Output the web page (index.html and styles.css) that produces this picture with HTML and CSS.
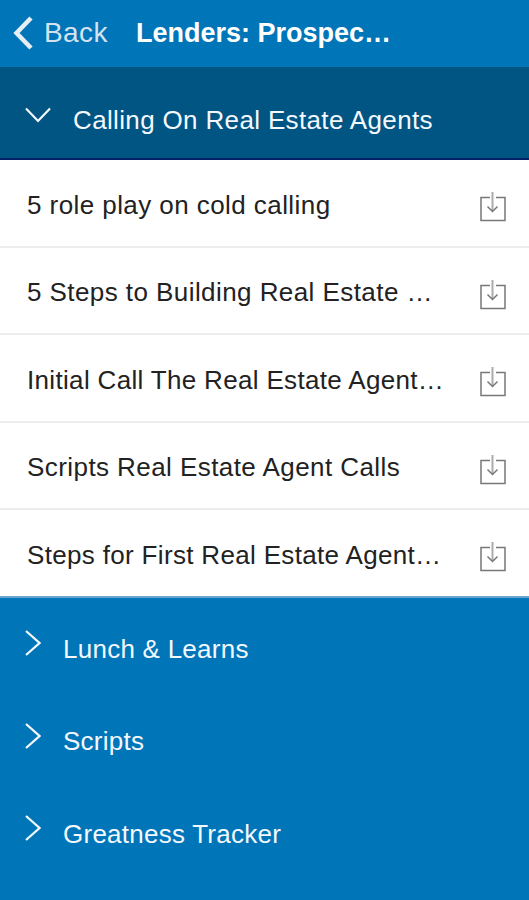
FILE: index.html
```html
<!DOCTYPE html>
<html lang="en">
<head>
    <meta charset="UTF-8">
    <meta name="viewport" content="width=device-width, initial-scale=1.0">
    <title>Lenders: Prospecting</title>
    <link rel="stylesheet" href="styles.css">
</head>
<body>
    <header class="navbar">
        <a class="back">
            <svg class="back-icon" width="20" height="34" viewBox="0 0 20 34"><path d="M18 2 L3.5 17 L18 32"/></svg>
            <span>Back</span>
        </a>
        <h1 class="title">Lenders: Prospec…</h1>
    </header>

    <div class="section open">
        <svg class="chevron" width="26" height="26" viewBox="0 0 26 26"><path d="M1 7.5 L13 20 L25 7.5"/></svg>
        <span>Calling On Real Estate Agents</span>
    </div>

    <ul class="files">
        <li>
            <span class="name">5 role play on cold calling</span>
            <svg class="download" width="26" height="31" viewBox="0 0 26 31"><path d="M10 6.5 H1 V29.5 H25 V6.5 H16"/><path class="arrow" d="M12.5 1 V20"/><path d="M7.5 15.5 L12.5 20.5 L17.5 15.5"/></svg>
        </li>
        <li>
            <span class="name">5 Steps to Building Real Estate …</span>
            <svg class="download" width="26" height="31" viewBox="0 0 26 31"><path d="M10 6.5 H1 V29.5 H25 V6.5 H16"/><path class="arrow" d="M12.5 1 V20"/><path d="M7.5 15.5 L12.5 20.5 L17.5 15.5"/></svg>
        </li>
        <li>
            <span class="name tight">Initial Call The Real Estate Agent…</span>
            <svg class="download" width="26" height="31" viewBox="0 0 26 31"><path d="M10 6.5 H1 V29.5 H25 V6.5 H16"/><path class="arrow" d="M12.5 1 V20"/><path d="M7.5 15.5 L12.5 20.5 L17.5 15.5"/></svg>
        </li>
        <li>
            <span class="name">Scripts Real Estate Agent Calls</span>
            <svg class="download" width="26" height="31" viewBox="0 0 26 31"><path d="M10 6.5 H1 V29.5 H25 V6.5 H16"/><path class="arrow" d="M12.5 1 V20"/><path d="M7.5 15.5 L12.5 20.5 L17.5 15.5"/></svg>
        </li>
        <li>
            <span class="name tight">Steps for First Real Estate Agent…</span>
            <svg class="download" width="26" height="31" viewBox="0 0 26 31"><path d="M10 6.5 H1 V29.5 H25 V6.5 H16"/><path class="arrow" d="M12.5 1 V20"/><path d="M7.5 15.5 L12.5 20.5 L17.5 15.5"/></svg>
        </li>
    </ul>

    <div class="section">
        <svg class="chevron" width="16" height="26" viewBox="0 0 16 26"><path d="M1 1 L14.5 13 L1 25"/></svg>
        <span>Lunch &amp; Learns</span>
    </div>
    <div class="section">
        <svg class="chevron" width="16" height="26" viewBox="0 0 16 26"><path d="M1 1 L14.5 13 L1 25"/></svg>
        <span>Scripts</span>
    </div>
    <div class="section">
        <svg class="chevron" width="16" height="26" viewBox="0 0 16 26"><path d="M1 1 L14.5 13 L1 25"/></svg>
        <span>Greatness Tracker</span>
    </div>
</body>
</html>
```
FILE: styles.css
```css
* {
    box-sizing: border-box;
}
body {
    margin: 0;
    min-height: 900px;
    background: #0075b7;
    color: #f4f8ff;
    font-family: "Liberation Sans", Arial, sans-serif;
    font-size: 26px;
    line-height: 30px;
}
svg {
    display: block;
    flex: none;
    fill: none;
}
.navbar {
    display: flex;
    align-items: center;
    height: 67px;
    padding: 0 13px 2px;
}
.back {
    display: flex;
    align-items: center;
    gap: 11px;
    width: 123px;
    color: #d5e3f0;
    font-size: 28px;
    letter-spacing: 0.4px;
}
.back-icon {
    stroke: #e6edf4;
    stroke-width: 4.5;
}
.title {
    margin: 0;
    color: #fff;
    font-size: 27px;
    font-weight: bold;
    white-space: nowrap;
}
.section {
    display: flex;
    align-items: center;
    gap: 22px;
    height: 92.5px;
    padding: 10px 25px 0;
    letter-spacing: 0.25px;
    white-space: nowrap;
}
.section.open {
    height: 93px;
    padding-top: 14px;
    background: #005582;
    border-bottom: 2px solid #002068;
    letter-spacing: 0.35px;
}
.chevron {
    margin-bottom: 11px;
    stroke: #f4f8ff;
    stroke-width: 2.2;
}
.files {
    margin: 0;
    padding: 0;
    list-style: none;
    background: #fff;
    color: #222;
}
.files li {
    display: flex;
    align-items: center;
    justify-content: space-between;
    height: 87.5px;
    padding: 4px 23px 0 27px;
    border-bottom: 2px solid #ededee;
}
.files li:last-child {
    border-bottom-color: #6ba4d0;
}
.name {
    letter-spacing: 0.43px;
    white-space: nowrap;
}
.name.tight {
    letter-spacing: 0.33px;
}
.download {
    margin-top: 4px;
    stroke: #777;
    stroke-width: 1.5;
}
.download .arrow {
    stroke: #aaa;
    stroke-width: 2;
}
```
